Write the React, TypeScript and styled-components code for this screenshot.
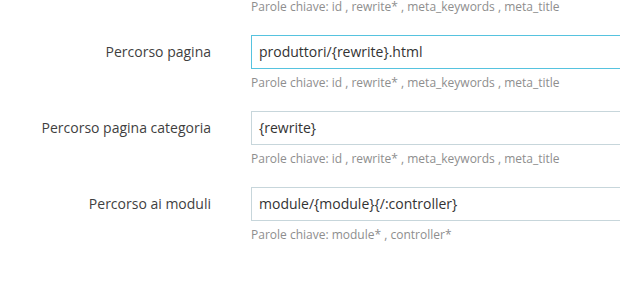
import React from "react";
import styled, { createGlobalStyle } from "styled-components";

const GlobalStyle = createGlobalStyle`
    html, body {
        margin: 0;
        padding: 0;
        background: #fff;
        overflow: hidden;
    }
    body {
        font-family: "Open Sans", "Liberation Sans", sans-serif;
        color: #555;
    }
`;

const Form = styled.div`
    width: 700px;
`;

const Group = styled.div`
    display: grid;
    grid-template-columns: 211px 420px;
    column-gap: 40px;
    align-items: start;
    margin-bottom: 20px;
`;

const Label = styled.label`
    text-align: right;
    font-size: 14px;
    color: #3f3f3f;
    line-height: 34px;
`;

const Field = styled.div`
    display: flex;
    flex-direction: column;
`;

const Input = styled.div<{ $focused?: boolean }>`
    height: 34px;
    box-sizing: border-box;
    border: 1px solid ${(p) => (p.$focused ? "#56c3df" : "#c7d6db")};
    padding: 0 7px;
    font-size: 14px;
    line-height: 32px;
    color: #333;
    white-space: nowrap;
`;

const Help = styled.p`
    margin: 5px 0 0;
    font-size: 12px;
    line-height: 17px;
    color: #8e8e8e;
`;

const TopHelp = styled(Help)`
    margin: -2px 0 20px 251px;
`;

type Route = {
    label: string;
    value: string;
    keywords: string;
    focused?: boolean;
};

const routes: Route[] = [
    {
        label: "Percorso pagina",
        value: "produttori/{rewrite}.html",
        keywords: "Parole chiave: id , rewrite* , meta_keywords , meta_title",
        focused: true,
    },
    {
        label: "Percorso pagina categoria",
        value: "{rewrite}",
        keywords: "Parole chiave: id , rewrite* , meta_keywords , meta_title",
    },
    {
        label: "Percorso ai moduli",
        value: "module/{module}{/:controller}",
        keywords: "Parole chiave: module* , controller*",
    },
];

const App = () => (
    <>
        <GlobalStyle />
        <Form>
            <TopHelp>
                Parole chiave: id , rewrite* , meta_keywords , meta_title
            </TopHelp>
            {routes.map((r) => (
                <Group key={r.label}>
                    <Label>{r.label}</Label>
                    <Field>
                        <Input $focused={r.focused}>{r.value}</Input>
                        <Help>{r.keywords}</Help>
                    </Field>
                </Group>
            ))}
        </Form>
    </>
);

export default App;
